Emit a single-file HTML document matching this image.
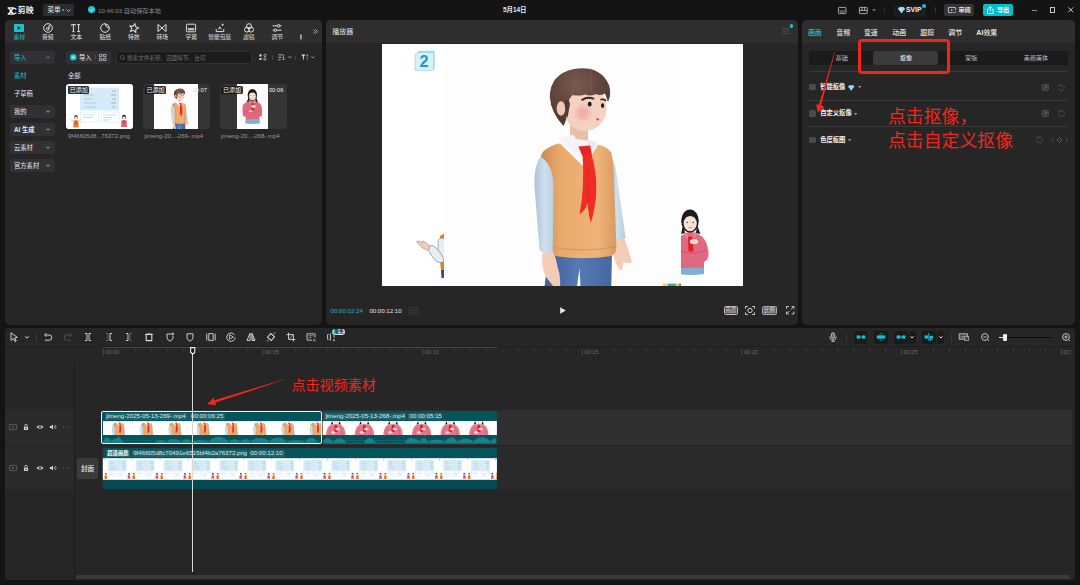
<!DOCTYPE html>
<html lang="zh-CN">
<head>
<meta charset="utf-8">
<title>剪映</title>
<style>
*{box-sizing:border-box;margin:0;padding:0}
html,body{width:1080px;height:585px;overflow:hidden;background:#141414}
body{position:relative;font-family:"Liberation Sans","Noto Sans CJK SC",sans-serif;color:#dcdcdc;font-size:7px;line-height:1}
.a{position:absolute}
.t{position:absolute;white-space:nowrap;line-height:10px;height:10px}
.panel{position:absolute;background:#262626;border-radius:5px;overflow:hidden}
.hdr{position:absolute;left:0;top:0;right:0;height:23px;background:#2e2e2e}
.cy{color:#1fc3d0}
.btn{position:absolute;background:#333334;border-radius:2px}
svg{position:absolute;overflow:visible}
.ic{stroke:#d8d8d8;fill:none;stroke-width:1}
</style>
</head>
<body>
<svg width="0" height="0" style="left:0;top:0"><defs>
<filter id="bl" x="-50%" y="-50%" width="200%" height="200%"><feGaussianBlur stdDeviation="2.2"/></filter>
<linearGradient id="gv" x1="0" x2="1" y1="0" y2="0"><stop offset="0" stop-color="#c98a55"/><stop offset="0.25" stop-color="#e9a96c"/><stop offset="0.75" stop-color="#f0b47a"/><stop offset="1" stop-color="#d99a62"/></linearGradient>
<linearGradient id="gs" x1="0" x2="1" y1="0" y2="0"><stop offset="0" stop-color="#a9c3d8"/><stop offset="0.5" stop-color="#cfe0ec"/><stop offset="1" stop-color="#b4cbdd"/></linearGradient>
<linearGradient id="gp" x1="0" x2="1" y1="0" y2="0"><stop offset="0" stop-color="#3f5f96"/><stop offset="0.5" stop-color="#5679b4"/><stop offset="1" stop-color="#4668a2"/></linearGradient>
<radialGradient id="gh" cx="0.45" cy="0.3" r="0.7"><stop offset="0" stop-color="#7a5a50"/><stop offset="1" stop-color="#4e362f"/></radialGradient>
<symbol id="boy" viewBox="0 0 236 242" overflow="visible"><g transform="translate(-444,-44)">
<path d="M553 254L612 252L611.3 286L580.5 286L579.5 268.5L577 286L544.6 286Q546 268 553 254Z" fill="url(#gp)"/>
<path d="M541 156Q534 165 534.4 185L539.5 250Q546 256 553.8 252L555 170Z" fill="url(#gs)"/>
<path d="M608 152Q616 160 618 185L625.6 238Q620 243 612 240L610 170Z" fill="url(#gs)"/>
<path d="M542.6 253Q540.6 266 546 277L553 286L560 286Q561 276 557.6 267Q556 258 553.6 252Z" fill="#f3cdb8"/>
<path d="M613 240.5Q611.6 254 616 264L620 270.5Q622 271 622.6 268L623.6 262Q627 264 631.8 262.5Q629 250 624.6 239.5Z" fill="#f3cdb8"/>
<path d="M570 124L588 127V146H570Z" fill="#e8bfa8"/>
<path d="M570 138L598 142L586 168Z" fill="#f3f3f7"/>
<path d="M545 150Q553 144 560 143.5L584 167L598 145Q606 146 611 152Q614 165 614 180L616.4 248Q616 256 608 256.5Q585 260 558 256.5Q552.8 256 552.8 250L553.5 185Q553 165 541 157Q541 153 545 150Z" fill="url(#gv)"/>
<path d="M553 247.6Q585 252.6 616.2 246.6" stroke="#c98a55" stroke-width="0.9" fill="none" opacity="0.8"/><path d="M559 139L573 134.5L583 148L574 153.5Z" fill="#f4f4f8"/>
<path d="M588 140L597.5 142.5L593 151L586 148Z" fill="#e9e9f0"/>
<path d="M578.4 146.4L590.2 145.6L592 155.4L582.4 156Z" fill="#e5251f"/>
<path d="M582.6 154.5L591.4 154Q601.5 188 590.8 223.3Q588.4 214 587.6 203Q585 211 579.5 214.2Q584.6 190 582.6 154.5Z" fill="#f02c25"/><path d="M587.6 203Q589.5 185 588 165" stroke="#c81d18" stroke-width="0.8" fill="none" opacity="0.6"/>
<ellipse cx="585" cy="108" rx="21.6" ry="23" fill="#f4d2c1"/>
<circle cx="583" cy="113" r="7" fill="#f2a39c" opacity="0.75" filter="url(#bl)"/>
<path d="M563.5 126Q551 113 549.8 97Q550 74 574 69Q600 65 609 85Q611.8 94 608 102Q606.4 97 605 93.4Q600 96.4 596 94Q590 96.8 585 94.4Q578 96.4 572.6 95Q567 100 567.6 110Q567 119 563.5 126Z" fill="url(#gh)"/><path d="M577 70Q572 82 573 94M591 68Q590 82 592 94" stroke="#86675c" stroke-width="0.8" fill="none" opacity="0.55"/>
<ellipse cx="561" cy="108.5" rx="4.4" ry="7.2" fill="#f0c8b4"/><path d="M564.5 100Q569 98 570 104Q568.5 112 567.5 118Q565 112 564.5 100Z" fill="#523a32"/>
<ellipse cx="589.7" cy="104.2" rx="1.9" ry="2.4" fill="#1d1714"/>
<ellipse cx="602.6" cy="105.6" rx="1.6" ry="2.3" fill="#1d1714"/>
<path d="M582.2 99.8Q587 96.6 593.4 98.6" stroke="#3b2720" stroke-width="2" fill="none" stroke-linecap="round"/><path d="M601 99.6Q603.6 98.8 605.6 100.4" stroke="#3b2720" stroke-width="1.6" fill="none" stroke-linecap="round"/>
<ellipse cx="597.6" cy="119.4" rx="1.5" ry="1.1" fill="#c9534e"/>
</g></symbol>
<symbol id="png" viewBox="0 0 67 45" preserveAspectRatio="none"><rect width="67" height="45" fill="#fff"/>
<rect x="14" y="3.6" width="39" height="22.8" fill="#d5ebf8"/>
<path d="M18 7H24M18 11H28M18 15H27M18 19H31M18 23H30" stroke="#a9bcc8" stroke-width="0.7"/>
<path d="M46 7H50M46 15H50M46 23H50" stroke="#5fc9d6" stroke-width="0.9"/><path d="M45 11H50M45 19H50" stroke="#e08a8a" stroke-width="0.9"/>
<rect x="14.5" y="28" width="18" height="10" fill="#fff" stroke="#cfe3ee" stroke-width="0.5"/><rect x="35" y="28" width="18" height="10" fill="#fff" stroke="#cfe3ee" stroke-width="0.5"/>
<path d="M17 31H29M17 33.5H27M37 31H50M37 33.5H46M37 36H44" stroke="#b8c2c8" stroke-width="0.6"/>
<circle cx="2.6" cy="2.4" r="1.2" fill="#6fd0e0"/>
<ellipse cx="10" cy="33" rx="1.8" ry="2" fill="#5a3c30"/><ellipse cx="10" cy="34" rx="1.3" ry="1.4" fill="#f3d2c0"/><path d="M7.6 36.4H12.4L12.8 43.5H7.2Z" fill="#e0842c"/><path d="M7.6 37L4.4 35.4M12.4 37L15.6 35.4" stroke="#cfd8dd" stroke-width="1"/><rect x="9.5" y="36.4" width="1" height="4" fill="#e02020"/>
<ellipse cx="58" cy="33" rx="1.9" ry="2.2" fill="#1c1a1c"/><ellipse cx="58" cy="33.8" rx="1.3" ry="1.5" fill="#f7e2d6"/><path d="M55.4 36.4Q58 35.4 60.6 36.4L61 43H55Z" fill="#e0607a"/><rect x="57.5" y="36.2" width="1" height="3.4" fill="#e02020"/>
</symbol>
<symbol id="girlT" viewBox="0 0 28.4 13.9"><rect width="28.4" height="13.9" fill="#fff"/>
<path d="M10.6 0L9 3.6L11.4 2.8ZM17.8 0L19.4 3.6L17 2.8Z" fill="#1c1a1c"/>
<path d="M11.8 0H16.6V2.2Q14.2 3.4 11.8 2.2Z" fill="#f7e2d6"/>
<path d="M4.6 13.9Q4.6 7.4 8 4.4Q10.4 2.8 14.2 2.8Q18 2.8 20.4 4.4Q23.8 7.4 23.8 13.9Z" fill="#e4798d"/>
<path d="M7.6 13.9Q7.6 9 9.4 6.2M20.8 13.9Q20.8 9 19 6.2" stroke="#c9566e" stroke-width="0.5" fill="none"/>
<path d="M11.6 2.6L14.2 4.6L16.8 2.6L17.6 3.6L14.2 6L10.8 3.6Z" fill="#f090a4"/>
<path d="M13 4H15.4L16 10.8H12.6Z" fill="#e21c24"/>
<ellipse cx="16" cy="8" rx="2.3" ry="1.4" fill="#f9dccd"/><ellipse cx="11.6" cy="11.4" rx="2.2" ry="1.2" fill="#f9dccd"/>
</symbol>
<symbol id="girl" viewBox="0 0 60 80" overflow="visible"><g transform="translate(-660,-200)">
<path d="M672 240Q680 232 690 231Q700 232 707 240Q710 252 708 262L703 263L704 268.5L677 269L677.5 263L672 262Q670 250 672 240Z" fill="#e0687f"/>
<path d="M677 268L704 267.5L704.5 276Q690 277.5 676.5 276Z" fill="#7fb0cf"/>
<path d="M683 224Q681 231 679 235L685 233ZM697 224Q699 231 701 235L695.5 233Z" fill="#1c1a1c"/>
<ellipse cx="690" cy="221" rx="9" ry="11.5" fill="#1c1a1c"/>
<ellipse cx="690.2" cy="223.5" rx="6.6" ry="7.8" fill="#f7e2d6"/>
<path d="M682.6 219Q690 213 697.6 219Q697 212.5 690 212.5Q683 212.5 682.6 219Z" fill="#1c1a1c"/>
<path d="M685 232L690 237L695.5 232L697 235L690 240L683.5 235Z" fill="#e98298"/>
<path d="M688 236.5H692.4L693.5 251.5H688.5Z" fill="#e01f26"/>
<ellipse cx="692" cy="243" rx="4.4" ry="2.6" fill="#f7dccf"/><ellipse cx="687" cy="252.5" rx="4" ry="2.2" fill="#f7dccf"/>
<path d="M674 252Q690 258 706 250" stroke="#b84b63" stroke-width="0.6" fill="none"/>
<circle cx="687.2" cy="222.4" r="0.8" fill="#222"/><circle cx="693.2" cy="222.4" r="0.8" fill="#222"/><path d="M688.4 227.2Q690.2 228.8 692 227.2" stroke="#c4525a" stroke-width="0.8" fill="none"/>
</g></symbol>
</defs></svg>
<!-- TITLE BAR -->
<div class="a" id="titlebar" style="left:0;top:0;width:1080px;height:20px;background:#141414">
  <svg style="left:6.5px;top:6.5px" width="10" height="8" viewBox="0 0 10 8"><path d="M0.6 0.8H6.6L9.4 2.4M0.6 7.2H6.6L9.4 5.6M1.6 1L6.4 7M6.4 1L1.6 7" stroke="#f2f2f2" stroke-width="1.3" fill="none"/></svg>
  <div class="t" style="left:17.8px;top:5.6px;font-size:7.9px;font-weight:700;color:#f2f2f2">剪映</div>
  <div class="btn" style="left:43px;top:4px;width:31px;height:12px;background:#2c2c2f"></div>
  <div class="t" style="left:47.5px;top:5px;font-size:6.6px;color:#e8e8e8">菜单</div>
  <div class="a" style="left:61.5px;top:9px;width:2px;height:2px;border-radius:1px;background:#1fc3d0"></div>
  <svg style="left:66px;top:8.5px" width="5" height="3" viewBox="0 0 5 3"><path d="M0.4 0.4L2.5 2.5L4.6 0.4" stroke="#cfcfcf" stroke-width="0.8" fill="none"/></svg>
  <svg style="left:87.7px;top:6.4px" width="7.2" height="7.2" viewBox="0 0 8 8"><circle cx="4" cy="4" r="4" fill="#1fc3d0"/><path d="M2.3 4.1L3.5 5.3L5.7 2.9" stroke="#fff" stroke-width="0.9" fill="none"/></svg>
  <div class="t" style="left:98px;top:5.5px;font-size:6.2px;color:#8c8c8c">10:46:03 自动保存本地</div>
  <div class="t" style="left:503px;top:5px;font-size:6.4px;color:#eaeaea;font-weight:700">5月14日</div>
  <!-- right icons -->
  <svg style="left:838px;top:6.5px" width="8.4" height="7" viewBox="0 0 8.4 7"><rect x="0.4" y="0.4" width="7.6" height="6.2" rx="0.8" stroke="#c9c9c9" stroke-width="0.8" fill="none"/><path d="M1.8 4.9H6.6" stroke="#c9c9c9" stroke-width="0.8"/><path d="M1.6 3.3H2.6M3.7 3.3H4.7M5.8 3.3H6.8" stroke="#c9c9c9" stroke-width="0.7"/></svg>
  <svg style="left:858.5px;top:6.5px" width="8.6" height="7" viewBox="0 0 8.6 7"><rect x="0.4" y="0.4" width="7.8" height="6.2" rx="0.6" stroke="#c9c9c9" stroke-width="0.8" fill="none"/><path d="M0.4 3.4H8.2M3 0.4V3.4M5.6 0.4V3.4" stroke="#c9c9c9" stroke-width="0.8"/></svg>
  <svg style="left:871.5px;top:9px" width="4" height="2.4" viewBox="0 0 4 2.4"><path d="M0 0H4L2 2.4Z" fill="#6a6a6a"/></svg>
  <div class="a" style="left:883.5px;top:7px;width:1px;height:6px;background:#333"></div>
  <div class="btn" style="left:893.5px;top:4.5px;width:32px;height:12px;background:#1d1d21;border-radius:2.5px"></div>
  <svg style="left:897.5px;top:7px" width="7" height="6" viewBox="0 0 7 6"><path d="M1.4 0H5.6L7 2L3.5 6L0 2Z" fill="#7fd6ea"/><path d="M0 2H7M2.4 2L3.5 6L4.6 2" stroke="#e9fbff" stroke-width="0.5" fill="none"/></svg>
  <div class="t" style="left:906px;top:5px;font-size:6.8px;font-weight:700;color:#f0f0f0">SVIP</div>
  <div class="a" style="left:921.5px;top:3.5px;width:4px;height:4px;border-radius:2px;background:#17c5d2"></div>
  <div class="a" style="left:934.5px;top:7px;width:1px;height:6px;background:#333"></div>
  <div class="btn" style="left:944px;top:4px;width:30px;height:12.4px;background:#333335"></div>
  <svg style="left:948px;top:6.8px" width="8" height="6.6" viewBox="0 0 8 6.6"><path d="M4.6 5.6H0.9Q0.4 5.6 0.4 5.1V0.9Q0.4 0.4 0.9 0.4H7.1Q7.6 0.4 7.6 0.9V3" stroke="#e6e6e6" stroke-width="0.8" fill="none"/><path d="M3.2 2L5 3L3.2 4Z" fill="#e6e6e6"/><path d="M5.6 5L6.5 6L7.8 4.4" stroke="#e6e6e6" stroke-width="0.8" fill="none"/></svg>
  <div class="t" style="left:958.5px;top:5px;font-size:6.1px;font-weight:700;color:#eaeaea">审阅</div>
  <div class="btn" style="left:983px;top:4px;width:30px;height:12.4px;background:#00c0cc"></div>
  <svg style="left:987.4px;top:6px" width="6.6" height="8" viewBox="0 0 6.6 8"><path d="M1.8 3.2H0.5V7.5H6.1V3.2H4.8" stroke="#fff" stroke-width="0.8" fill="none"/><path d="M3.3 5.4V0.7M1.7 2.2L3.3 0.6L4.9 2.2" stroke="#fff" stroke-width="0.8" fill="none"/></svg>
  <div class="t" style="left:997px;top:5px;font-size:6.1px;font-weight:700;color:#fff">导出</div>
  <div class="a" style="left:1031.5px;top:9.6px;width:5.6px;height:0.8px;background:#8e8e8e"></div>
  <div class="a" style="left:1049.5px;top:7.2px;width:5.8px;height:5.8px;border:0.8px solid #c4c4c4"></div>
  <svg style="left:1067.6px;top:7.2px" width="5.6" height="5.6" viewBox="0 0 5.6 5.6"><path d="M0.3 0.3L5.3 5.3M5.3 0.3L0.3 5.3" stroke="#d8d8d8" stroke-width="0.9"/></svg>
</div>

<!-- MEDIA PANEL -->
<div class="panel" id="media" style="left:5px;top:20px;width:317px;height:305px">
  <div class="hdr"></div>
  <svg style="left:14px;top:7.5px" width="1" height="1"><g class="ic" stroke="#17c5d2" style="stroke:#17c5d2"><rect x="-5" y="-4" width="10" height="8" rx="1" fill="#17c5d2" stroke="none"/><path d="M-1.3 -2L2 0L-1.3 2Z" fill="#262626" stroke="none"/></g></svg>
  <div class="t" style="left:8.5px;top:11.7px;font-size:5.8px;color:#17c5d2">素材</div>
  <svg style="left:42.5px;top:7.5px" width="1" height="1"><g class="ic" stroke="#e0e0e0" style="stroke:#e0e0e0"><circle cx="0" cy="0" r="4.3"/><circle cx="-0.3" cy="0.8" r="1.3"/><path d="M1 0.8V-2.4L2.4 -1.8"/></g></svg>
  <div class="t" style="left:37.0px;top:11.7px;font-size:5.8px;color:#e0e0e0">音频</div>
  <svg style="left:71px;top:7.5px" width="1" height="1"><g class="ic" stroke="#e0e0e0" style="stroke:#e0e0e0"><path d="M-4.6 -3.4H-0.6M-2.6 -3.4V3.6M-3.6 3.6H-1.6M-4.6 -3.4V-2.4M-0.6 -3.4V-2.4M1.2 -3.4H4M1.2 3.6H4M2.6 -3.4V3.6"/></g></svg>
  <div class="t" style="left:65.5px;top:11.7px;font-size:5.8px;color:#e0e0e0">文本</div>
  <svg style="left:100px;top:7.5px" width="1" height="1"><g class="ic" stroke="#e0e0e0" style="stroke:#e0e0e0"><path d="M4.3 0A4.3 4.3 0 1 1 0 -4.3"/><path d="M0 -4.3Q0.6 -0.4 4.3 0Q4 -3.6 0 -4.3Z"/></g></svg>
  <div class="t" style="left:94.5px;top:11.7px;font-size:5.8px;color:#e0e0e0">贴纸</div>
  <svg style="left:128.5px;top:7.5px" width="1" height="1"><g class="ic" stroke="#e0e0e0" style="stroke:#e0e0e0"><path d="M0 -4.4L1.3 -1.6L4.4 -1.2L2.1 0.9L2.7 4L0 2.4L-2.7 4L-2.1 0.9L-4.4 -1.2L-1.3 -1.6Z" transform="rotate(12)"/></g></svg>
  <div class="t" style="left:123.0px;top:11.7px;font-size:5.8px;color:#e0e0e0">特效</div>
  <svg style="left:157px;top:7.5px" width="1" height="1"><g class="ic" stroke="#e0e0e0" style="stroke:#e0e0e0"><path d="M-4 -3.6L4 3.6V-3.6L-4 3.6Z"/></g></svg>
  <div class="t" style="left:151.5px;top:11.7px;font-size:5.8px;color:#e0e0e0">转场</div>
  <svg style="left:186px;top:7.5px" width="1" height="1"><g class="ic" stroke="#e0e0e0" style="stroke:#e0e0e0"><rect x="-4.6" y="-3.8" width="9.2" height="7.6" rx="1"/><rect x="-3.2" y="0" width="6.4" height="2.4" fill="#bdbdbd" stroke="none"/></g></svg>
  <div class="t" style="left:180.5px;top:11.7px;font-size:5.8px;color:#e0e0e0">字幕</div>
  <svg style="left:214.5px;top:7.5px" width="1" height="1"><g class="ic" stroke="#e0e0e0" style="stroke:#e0e0e0"><path d="M-3.8 1V3.6H3.8V1M-1.6 1.4L-0.2 -1.2L1.2 1.4"/><path d="M2.6 -4.4V-2M1.4 -3.2H3.8" stroke-width="0.8"/></g></svg>
  <div class="t" style="left:203.2px;top:11.7px;font-size:5.8px;color:#e0e0e0">智能包装</div>
  <svg style="left:243.5px;top:7.5px" width="1" height="1"><g class="ic" stroke="#e0e0e0" style="stroke:#e0e0e0"><circle cx="0" cy="-1.8" r="2.5"/><circle cx="-2" cy="1.6" r="2.5"/><circle cx="2" cy="1.6" r="2.5"/></g></svg>
  <div class="t" style="left:238.0px;top:11.7px;font-size:5.8px;color:#e0e0e0">滤镜</div>
  <svg style="left:272px;top:7.5px" width="1" height="1"><g class="ic" stroke="#e0e0e0" style="stroke:#e0e0e0"><path d="M-4.4 -2.2H0.4M3 -2.2H4.4M-4.4 2.2H-3M-0.4 2.2H4.4"/><circle cx="1.7" cy="-2.2" r="1.3"/><circle cx="-1.7" cy="2.2" r="1.3"/></g></svg>
  <div class="t" style="left:266.5px;top:11.7px;font-size:5.8px;color:#e0e0e0">调节</div>
  <div class="t" style="left:294.5px;top:11.7px;font-size:5.8px;color:#e0e0e0;width:2.6px;overflow:hidden">模</div>
  <svg style="left:307.5px;top:9px" width="5" height="5" viewBox="0 0 5 5"><path d="M0.4 0.4L2.4 2.5L0.4 4.6M2.6 0.4L4.6 2.5L2.6 4.6" stroke="#cfcfcf" stroke-width="0.7" fill="none"/></svg>
  <!-- sidebar -->
  <div class="btn" style="left:4.6px;top:31px;width:45px;height:13px;background:#313133"></div>
  <div class="t cy" style="left:9px;top:32.5px;font-size:6.3px">导入</div>
  <svg style="left:41px;top:36px" width="4" height="3" viewBox="0 0 4 3"><path d="M0.4 2.4L2 0.7L3.6 2.4" stroke="#17c5d2" stroke-width="0.8" fill="none"/></svg>
  <div class="t cy" style="left:9px;top:50.5px;font-size:6.3px">素材</div>
  <div class="t" style="left:9px;top:68.5px;font-size:6.3px;color:#e6e6e6">子草稿</div>
  <div class="btn" style="left:4.6px;top:85px;width:45px;height:13px;background:#313133"></div>
  <div class="t" style="left:9px;top:86.5px;font-size:6.3px;color:#e6e6e6;font-weight:400">我的</div>
  <svg style="left:41px;top:90px" width="4" height="3" viewBox="0 0 4 3"><path d="M0.4 0.6L2 2.3L3.6 0.6" stroke="#d0d0d0" stroke-width="0.8" fill="none"/></svg>
  <div class="btn" style="left:4.6px;top:103px;width:45px;height:13px;background:#313133"></div>
  <div class="t" style="left:9px;top:104.5px;font-size:6.3px;color:#e6e6e6;font-weight:700">AI 生成</div>
  <svg style="left:41px;top:108px" width="4" height="3" viewBox="0 0 4 3"><path d="M0.4 0.6L2 2.3L3.6 0.6" stroke="#d0d0d0" stroke-width="0.8" fill="none"/></svg>
  <div class="btn" style="left:4.6px;top:121px;width:45px;height:13px;background:#313133"></div>
  <div class="t" style="left:9px;top:122.5px;font-size:6.3px;color:#e6e6e6;font-weight:400">云素材</div>
  <svg style="left:41px;top:126px" width="4" height="3" viewBox="0 0 4 3"><path d="M0.4 0.6L2 2.3L3.6 0.6" stroke="#d0d0d0" stroke-width="0.8" fill="none"/></svg>
  <div class="btn" style="left:4.6px;top:139px;width:45px;height:13px;background:#313133"></div>
  <div class="t" style="left:9px;top:140.5px;font-size:6.3px;color:#e6e6e6;font-weight:400">官方素材</div>
  <svg style="left:41px;top:144px" width="4" height="3" viewBox="0 0 4 3"><path d="M0.4 0.6L2 2.3L3.6 0.6" stroke="#d0d0d0" stroke-width="0.8" fill="none"/></svg>
  <!-- import row -->
  <div class="btn" style="left:61px;top:31px;width:45px;height:13px;background:#313133"></div>
  <svg style="left:64.5px;top:34.2px" width="6.6" height="6.6" viewBox="0 0 8 8"><circle cx="4" cy="4" r="4" fill="#17c5d2"/><path d="M4 2.2V5.8M2.2 4H5.8" stroke="#fff" stroke-width="0.9"/></svg>
  <div class="t" style="left:74px;top:32.5px;font-size:6.3px;color:#f0f0f0">导入</div>
  <div class="a" style="left:89.5px;top:35px;width:0.6px;height:5px;background:#4a4a4a"></div>
  <svg style="left:94px;top:34px" width="7.4" height="7" viewBox="0 0 7.4 7"><path d="M0.4 0.4H3V2.6H0.4ZM4.4 0.4H7V2.6H4.4ZM0.4 4.4H3V6.6H0.4ZM4.4 4.4H7V6.6H4.4Z" stroke="#d6d6d6" stroke-width="0.7" fill="none"/></svg>
  <div class="a" style="left:110.5px;top:31px;width:136px;height:13.4px;background:#1b1b1b;border-radius:2px;border:0.6px solid #2f2f2f"></div>
  <svg style="left:114.5px;top:35px" width="5.4" height="5.4" viewBox="0 0 5.4 5.4"><circle cx="2.3" cy="2.3" r="1.9" stroke="#777" stroke-width="0.6" fill="none"/><path d="M3.7 3.7L5 5" stroke="#777" stroke-width="0.6"/></svg>
  <div class="t" style="left:122px;top:33px;font-size:5.6px;color:#6f6f6f">搜索文件名称、画面情节、台词</div>
  <svg style="left:253.5px;top:34px" width="8" height="6.4" viewBox="0 0 8 6.4"><path d="M0.3 0.3H2.6V2.4H0.3ZM0.3 4H2.6V6.1H0.3Z" fill="#cfcfcf"/><circle cx="6" cy="1.4" r="1.2" stroke="#cfcfcf" stroke-width="0.7" fill="none"/><circle cx="6" cy="5" r="1.2" stroke="#cfcfcf" stroke-width="0.7" fill="none"/></svg>
  <div class="a" style="left:267px;top:35px;width:0.6px;height:5px;background:#444"></div>
  <svg style="left:272.5px;top:34px" width="7" height="6.6" viewBox="0 0 7 6.6"><path d="M0.2 0.8H4.6M0.2 3.3H3.6M0.2 5.8H2.8" stroke="#cfcfcf" stroke-width="0.8"/><path d="M5.6 0.6V5.8M4.6 4.8L5.6 6L6.6 4.8" stroke="#cfcfcf" stroke-width="0.7" fill="none"/></svg>
  <svg style="left:283px;top:36.4px" width="3.6" height="2.4" viewBox="0 0 3.6 2.4"><path d="M0.3 0.4L1.8 2L3.3 0.4" stroke="#cfcfcf" stroke-width="0.7" fill="none"/></svg>
  <div class="a" style="left:290px;top:35px;width:0.6px;height:5px;background:#444"></div>
  <svg style="left:295.6px;top:34.2px" width="8" height="6.4" viewBox="0 0 8 6.4"><path d="M0.2 0.4H4.6L2.9 2.6V5.8L1.9 5.2V2.6Z" fill="#d6d6d6"/><path d="M5 1.2H7.6M5.4 3.2H7.2M5.8 5.2H7" stroke="#d6d6d6" stroke-width="0.6"/></svg>
  <svg style="left:306px;top:36.4px" width="3.6" height="2.4" viewBox="0 0 3.6 2.4"><path d="M0.3 0.4L1.8 2L3.3 0.4" stroke="#cfcfcf" stroke-width="0.7" fill="none"/></svg>
  <div class="t" style="left:63px;top:50.5px;font-size:6.3px;color:#e0e0e0">全部</div>
  <!-- THUMBS -->
  <div class="a" id="th1" style="left:61.3px;top:64.3px;width:67px;height:45px;border-radius:3.5px;background:#fff;overflow:hidden"><svg style="left:0;top:0" width="67" height="45"><use href="#png" x="0" y="0" width="67" height="45"/></svg><div class="a" style="left:1.8px;top:2px;width:21.4px;height:8px;background:rgba(20,20,20,0.88);border-radius:1.5px"></div><div class="t" style="left:3.4px;top:1px;font-size:6px;color:#f4f4f4">已添加</div></div>
  <div class="a" id="th2" style="left:138px;top:64.3px;width:67px;height:45px;border-radius:3.5px;background:#353535;overflow:hidden"><div class="a" style="left:11.1px;top:0;width:44.2px;height:45px;background:#fdfdfd"></div><svg style="left:11.1px;top:0" width="44.2" height="45" viewBox="0 0 236 242"><use href="#boy" x="0" y="0" width="236" height="242"/></svg><div class="a" style="left:1.8px;top:2px;width:21.4px;height:8px;background:rgba(20,20,20,0.88);border-radius:1.5px"></div><div class="t" style="left:3.4px;top:1px;font-size:6px;color:#f4f4f4">已添加</div><div class="t" style="left:49.4px;top:1px;font-size:5.8px;color:#f2f2f2"><span style="color:#cfe8c8">00</span>:07</div></div>
  <div class="a" id="th3" style="left:214.5px;top:64.3px;width:67px;height:45px;border-radius:3.5px;background:#353535;overflow:hidden"><div class="a" style="left:17.7px;top:0;width:30.5px;height:45px;background:#fdfdfd"></div><svg style="left:17.7px;top:0" width="30.5" height="45" viewBox="660.5 200 58.6 86.4"><use href="#girl" x="660" y="200" width="60" height="80"/></svg><div class="a" style="left:1.8px;top:2px;width:21.4px;height:8px;background:rgba(20,20,20,0.88);border-radius:1.5px"></div><div class="t" style="left:3.4px;top:1px;font-size:6px;color:#f4f4f4">已添加</div><div class="t" style="left:49.4px;top:1px;font-size:5.8px;color:#f2f2f2">00:06</div></div>
  <div class="t" style="left:63px;top:111px;font-size:6px;color:#9a9a9a">9f46605d8...76372.png</div>
  <div class="t" style="left:139.5px;top:111px;font-size:6px;color:#9a9a9a">jimeng-20...-269-.mp4</div>
  <div class="t" style="left:216px;top:111px;font-size:6px;color:#9a9a9a">jimeng-20...-268-.mp4</div>
</div>

<!-- PLAYER PANEL -->
<div class="panel" id="player" style="left:326px;top:20px;width:472px;height:305px">
  <div class="hdr"></div>
  <div class="t" style="left:6.3px;top:7px;font-size:7px;color:#e2e2e2">播放器</div>
  <svg style="left:455.5px;top:8px" width="7" height="6" viewBox="0 0 7 6"><path d="M0 0.5H7M0 3H7M0 5.5H7" stroke="#5c5c5c" stroke-width="0.7"/></svg>
  <div class="a" style="left:463.7px;top:4px;width:3.7px;height:3.7px;border-radius:2px;background:#17c5d2"></div>
  <!-- VIDEO -->
  <div class="a" id="video" style="left:56px;top:24px;width:360.5px;height:241.8px;background:#fff;overflow:hidden">
    <svg style="left:0;top:0" width="360.5" height="241.8" viewBox="382 44 360.5 241.8">
      <!-- left figure (bg image) -->
      <path d="M440 236Q444 233 446 234V277H442Q439 262 440 236Z" fill="#e8821e"/>
      <path d="M441 270L444 270V278H441.5Z" fill="#2f4f8a"/>
      <path d="M438 240Q442 236 445 240V262H441Q437 250 438 240Z" fill="#e6edf0" stroke="#5d7686" stroke-width="0.5"/>
      <path d="M429 246Q433 244 436 248Q444 256 444 262Q440 264 436 261Q431 256 428.5 250Z" fill="#e9eef1" stroke="#5d7686" stroke-width="0.6"/>
      <path d="M416.5 241.5Q419 240 423 243L422.5 240.6Q426 242 430 246.5Q430 249.5 427.5 250.5Q421 248.5 416.5 241.5Z" fill="#f2c9bb" stroke="#8a6a66" stroke-width="0.4"/>
      <!-- girl (bg image) -->
      <g>
      <path d="M681 236Q690 229 698 234Q707 238 708.5 252Q709 260 704 262L704 268.5L681 269Z" fill="#e0687f"/>
      <path d="M681 268L704 267.5L704 274Q692 275.5 681 274.5Z" fill="#7fb0cf"/>
      <path d="M683 224Q682 231 681 234L685 233ZM697 224Q699 231 700.5 234L696 233Z" fill="#1c1a1c"/>
      <ellipse cx="690" cy="221" rx="8.8" ry="11.5" fill="#1c1a1c"/>
      <ellipse cx="690.2" cy="223.5" rx="6.6" ry="7.8" fill="#f7e2d6"/>
      <path d="M682.6 219Q690 213 697.6 219Q697 212.5 690 212.5Q683 212.5 682.6 219Z" fill="#1c1a1c"/>
      <path d="M685 232L690 237L695.5 232L697 235L690 240L683.5 235Z" fill="#e98298"/>
      <path d="M688 236.5H692.4L693.5 251.5H688.5Z" fill="#e01f26"/>
      <ellipse cx="694" cy="241.5" rx="4.2" ry="2.6" fill="#f7dccf"/>
      <path d="M681 251Q694 256 706 250" stroke="#b84b63" stroke-width="0.6" fill="none"/>
      <circle cx="687.2" cy="222.4" r="0.7" fill="#222"/><circle cx="693.2" cy="222.4" r="0.7" fill="#222"/>
      <path d="M688.4 227.2Q690.2 228.6 692 227.2" stroke="#c4525a" stroke-width="0.7" fill="none"/>
      </g>
      <!-- "2" badge -->
      <path d="M418.6 50.8H433.4Q434.8 50.8 434.8 52.2V68Q434.8 69.2 433.8 69.8L432.8 70.4Q432 70.8 431 70.8H416Q414.6 70.8 414.6 69.4V55Z" fill="#a6dbe8"/>
      <path d="M417 53H432.2Q433.2 53 433.2 54V68.6Q433.2 69.9 432 69.9H416.6Q415.5 69.9 415.5 68.8V55.4Z" fill="#d9f0f8"/>
      <text x="424" y="66.9" text-anchor="middle" font-family="Liberation Sans, sans-serif" font-weight="700" font-size="16.3" fill="#1a9fc0">2</text>
      <!-- strip -->
      <!-- main clip -->
      <rect x="444" y="44" width="236.4" height="242" fill="#fdfdfd"/>
      <use href="#boy" x="444" y="44" width="236" height="242"/>
      <rect x="663" y="283.6" width="5" height="2.4" fill="#f3d34a"/><rect x="668" y="283.6" width="8" height="2.4" fill="#3fae9a"/><rect x="676" y="283.6" width="3" height="2.4" fill="#f3d34a"/><rect x="679" y="283.6" width="2" height="2.4" fill="#3d8fe0"/>
    </svg>
  </div>
  <!-- controls -->
  <div class="t cy" style="left:4.6px;top:285.5px;font-size:6.1px;color:#17b8c6">00:00:02:24</div>
  <div class="t" style="left:43.4px;top:285.5px;font-size:6.1px;color:#e4e4e4">00:00:12:10</div>
  <svg style="left:82.4px;top:287px" width="11" height="8" viewBox="0 0 11 8"><path d="M0 0.8H5M6 0.8H11M0 3H5M6 3H11M0 5.2H5M6 5.2H11M0 7.4H5M6 7.4H11" stroke="#3c3c3c" stroke-width="1"/></svg>
  <svg style="left:233.6px;top:287.4px" width="6" height="7" viewBox="0 0 6 7"><path d="M0.2 0.2L5.8 3.5L0.2 6.8Z" fill="#e8e8e8"/></svg>
  <div class="a" style="left:398px;top:286px;width:14.2px;height:8.8px;border:0.8px solid #bdbdbd;border-radius:1.6px;background:#4c4c4c"></div>
  <div class="t" style="left:399.6px;top:285.4px;font-size:5.4px;color:#e6e6e6">画质</div>
  <svg style="left:419.4px;top:286px" width="10" height="9" viewBox="0 0 10 9"><path d="M0.5 2.6V0.5H2.8M7.2 0.5H9.5V2.6M9.5 6.4V8.5H7.2M2.8 8.5H0.5V6.4" stroke="#e0e0e0" stroke-width="0.9" fill="none"/><circle cx="5" cy="4.5" r="2.2" stroke="#e0e0e0" stroke-width="0.9" fill="none"/></svg>
  <div class="a" style="left:436.2px;top:286px;width:14.6px;height:8.8px;border:0.8px solid #a8a8a8;border-radius:1.6px;background:#5a5a5a"></div>
  <div class="t" style="left:438px;top:285.4px;font-size:5.4px;color:#e6e6e6">比例</div>
  <svg style="left:459.6px;top:286.4px" width="8.4" height="8.4" viewBox="0 0 8.4 8.4"><path d="M0.5 2.8V0.5H2.8M5.6 0.5H7.9V2.8M7.9 5.6V7.9H5.6M2.8 7.9H0.5V5.6" stroke="#e0e0e0" stroke-width="0.9" fill="none"/><path d="M5 3.4L7.4 1M1 7.4L3.4 5" stroke="#e0e0e0" stroke-width="0.8"/></svg>
</div>

<!-- INSPECTOR PANEL -->
<div class="panel" id="insp" style="left:802px;top:20px;width:273px;height:305px">
  <div class="hdr"></div>
  <div class="t" style="left:5.9px;top:7.5px;font-size:6.95px;color:#17c5d2;font-weight:500">画面</div>
  <div class="t" style="left:34.2px;top:7.5px;font-size:6.95px;color:#e6e6e6;font-weight:500">音频</div>
  <div class="t" style="left:61.9px;top:7.5px;font-size:6.95px;color:#e6e6e6;font-weight:500">变速</div>
  <div class="t" style="left:90.2px;top:7.5px;font-size:6.95px;color:#e6e6e6;font-weight:500">动画</div>
  <div class="t" style="left:118.2px;top:7.5px;font-size:6.95px;color:#e6e6e6;font-weight:500">跟踪</div>
  <div class="t" style="left:146.2px;top:7.5px;font-size:6.95px;color:#e6e6e6;font-weight:500">调节</div>
  <div class="t" style="left:174.2px;top:7.5px;font-size:6.95px;color:#e6e6e6;font-weight:500"><b style="font-size:7.2px">AI</b>效果</div>
  <div class="a" style="left:6.8px;top:31px;width:259.2px;height:14px;background:#1b1b1b;border-radius:2.5px"></div>
  <div class="a" style="left:71.3px;top:31px;width:64.7px;height:14px;background:#3b3b3b;border-radius:2.5px"></div>
  <div class="t" style="left:33.6px;top:33px;font-size:6.1px;color:#bdbdbd">基础</div>
  <div class="t" style="left:97.9px;top:33px;font-size:6.1px;color:#f4f4f4">抠像</div>
  <div class="t" style="left:163.2px;top:33px;font-size:6.1px;color:#bdbdbd">蒙版</div>
  <div class="t" style="left:221.8px;top:33px;font-size:6.1px;color:#bdbdbd">美颜美体</div>
  <div class="a" style="left:6.8px;top:51.1px;width:259.2px;height:0.8px;background:#3a3a3a"></div>
  <div class="a" style="left:6.8px;top:79.7px;width:259.2px;height:0.8px;background:#3a3a3a"></div>
  <div class="a" style="left:6.8px;top:106.2px;width:259.2px;height:0.8px;background:#3a3a3a"></div>
  <div class="a" style="left:7px;top:63.9px;width:6.6px;height:6.6px;border-radius:1.6px;background:#4b4b4b"></div>
  <div class="t" style="left:18.2px;top:62.0px;font-size:6.3px;color:#f2f2f2;font-weight:700">智能抠像</div>
  <div class="a" style="left:7px;top:90.3px;width:6.6px;height:6.6px;border-radius:1.6px;background:#4b4b4b"></div>
  <div class="t" style="left:18.2px;top:88.4px;font-size:6.3px;color:#f2f2f2;font-weight:700">自定义抠像</div>
  <div class="a" style="left:7px;top:116.5px;width:6.6px;height:6.6px;border-radius:1.6px;background:#4b4b4b"></div>
  <div class="t" style="left:18.2px;top:114.6px;font-size:6.3px;color:#f2f2f2;font-weight:700">色度抠图</div>
  <svg style="left:46.2px;top:64.6px" width="6.4" height="5.4" viewBox="0 0 7 6"><path d="M1.4 0H5.6L7 2L3.5 6L0 2Z" fill="#58c9ea"/><path d="M0 2H7M2.4 2L3.5 6L4.6 2" stroke="#e9fbff" stroke-width="0.5" fill="none"/></svg>
  <svg style="left:55.7px;top:66.4px" width="3.4" height="2.2" viewBox="0 0 3.4 2.2"><path d="M0 0H3.4L1.7 2.2Z" fill="#9a9a9a"/></svg>
  <svg style="left:51.9px;top:92.8px" width="3.4" height="2.2" viewBox="0 0 3.4 2.2"><path d="M0 0H3.4L1.7 2.2Z" fill="#9a9a9a"/></svg>
  <svg style="left:45.6px;top:119.0px" width="3.4" height="2.2" viewBox="0 0 3.4 2.2"><path d="M0 0H3.4L1.7 2.2Z" fill="#9a9a9a"/></svg>
  <svg style="left:239.6px;top:63.8px" width="6.8" height="6.8" viewBox="0 0 6.8 6.8"><rect x="0.4" y="0.4" width="6" height="6" rx="0.6" fill="#3a3a3a" stroke="#5a5a5a" stroke-width="0.7"/><path d="M2.2 4.6L4.6 2.2M3 2.2H4.6V3.8" stroke="#777" stroke-width="0.6" fill="none"/></svg>
  <svg style="left:256.4px;top:63.8px" width="6.8" height="6.8" viewBox="0 0 6.8 6.8"><path d="M1.3 1.8A2.9 2.9 0 1 1 0.6 4.2" stroke="#5c5c5c" stroke-width="0.7" fill="none"/><path d="M0.4 0.6L1.2 2.2L2.8 1.6" stroke="#5c5c5c" stroke-width="0.7" fill="none"/></svg>
  <svg style="left:239.6px;top:90.2px" width="6.8" height="6.8" viewBox="0 0 6.8 6.8"><rect x="0.4" y="0.4" width="6" height="6" rx="0.6" fill="#3a3a3a" stroke="#5a5a5a" stroke-width="0.7"/><path d="M2.2 4.6L4.6 2.2M3 2.2H4.6V3.8" stroke="#777" stroke-width="0.6" fill="none"/></svg>
  <svg style="left:256.4px;top:90.2px" width="6.8" height="6.8" viewBox="0 0 6.8 6.8"><path d="M1.3 1.8A2.9 2.9 0 1 1 0.6 4.2" stroke="#5c5c5c" stroke-width="0.7" fill="none"/><path d="M0.4 0.6L1.2 2.2L2.8 1.6" stroke="#5c5c5c" stroke-width="0.7" fill="none"/></svg>
  <svg style="left:234px;top:116.4px" width="6.8" height="6.8" viewBox="0 0 6.8 6.8"><path d="M1.3 1.8A2.9 2.9 0 1 1 0.6 4.2" stroke="#5c5c5c" stroke-width="0.7" fill="none"/><path d="M0.4 0.6L1.2 2.2L2.8 1.6" stroke="#5c5c5c" stroke-width="0.7" fill="none"/></svg>
  <svg style="left:249px;top:116.8px" width="17" height="6" viewBox="0 0 17 6"><path d="M2.4 0.6L0.4 3L2.4 5.4M14.6 0.6L16.6 3L14.6 5.4" stroke="#5c5c5c" stroke-width="0.7" fill="none"/><path d="M8.5 0.5L11 3L8.5 5.5L6 3Z" stroke="#6a6a6a" stroke-width="0.7" fill="none"/></svg>
  <div class="a" style="left:55.7px;top:19px;width:92.3px;height:35px;border:3px solid #f2261b;border-radius:4px"></div>
  <svg style="left:0;top:0" width="273" height="305" viewBox="802 20 273 305"><path d="M835 52L821.2 105L824.3 107L817.8 112.4L816.1 104.6L819 104.4L834.5 52Z" fill="#f2261b"/></svg>
  <div class="t" style="left:85.9px;top:84.8px;font-size:17.9px;line-height:24.1px;height:auto;color:#f2261b;white-space:pre">点击抠像，
点击自定义抠像</div>
</div>

<!-- TIMELINE PANEL -->
<div class="a" style="left:5px;top:328.3px;width:1070px;height:6px;background:#262626;border-radius:4px 4px 0 0"></div>
<div class="panel" id="tl" style="left:5px;top:329px;width:1070px;height:251px;border-radius:4px">
<!--TL1-->
  <svg style="left:9.2px;top:8.25px" width="1" height="1"><g stroke="#dedede" stroke-width="0.9" fill="none" stroke-linejoin="round" ><path d="M-3 -4.2L3.4 0.4L0.6 1L2.2 4L1 4.6L-0.6 1.6L-3 3.4Z"/></g></svg>
  <svg style="left:21.7px;top:8.25px" width="1" height="1"><g stroke="#dedede" stroke-width="1" fill="none" stroke-linejoin="round" ><path d="M-1.8 -0.6L0 1.2L1.8 -0.6"/></g></svg>
  <div class="a" style="left:31px;top:4.5px;width:0.7px;height:8px;background:#3c3c3c"></div>
  <svg style="left:43.3px;top:8.25px" width="1" height="1"><g stroke="#dedede" stroke-width="0.9" fill="none" stroke-linejoin="round" ><path d="M-3.2 -2H1.2A2.6 2.6 0 0 1 1.2 3.2H-3"/><path d="M-1.6 -3.8L-3.4 -2L-1.6 -0.2"/></g></svg>
  <svg style="left:63.3px;top:8.25px" width="1" height="1"><g stroke="#555" stroke-width="0.9" fill="none" stroke-linejoin="round" ><path d="M3.2 -2H-1.2A2.6 2.6 0 0 0 -1.2 3.2H3"/><path d="M1.6 -3.8L3.4 -2L1.6 -0.2"/></g></svg>
  <svg style="left:83.3px;top:8.25px" width="1" height="1"><g stroke="#dedede" stroke-width="0.9" fill="none" stroke-linejoin="round" ><path d="M-3 -3.5H-1V3.5H-3M3 -3.5H1V3.5H3"/></g></svg>
  <svg style="left:103.7px;top:8.25px" width="1" height="1"><g stroke="#dedede" stroke-width="0.9" fill="none" stroke-linejoin="round" ><path d="M-3 -3.5H-1V3.5H-3" stroke="#6a6a6a"/><path d="M3 -3.5H1V3.5H3"/></g></svg>
  <svg style="left:123.8px;top:8.25px" width="1" height="1"><g stroke="#dedede" stroke-width="0.9" fill="none" stroke-linejoin="round" ><path d="M-3 -3.5H-1V3.5H-3"/><path d="M3 -3.5H1V3.5H3" stroke="#6a6a6a"/></g></svg>
  <svg style="left:144.2px;top:8.25px" width="1" height="1"><g stroke="#dedede" stroke-width="0.9" fill="none" stroke-linejoin="round" ><rect x="-2.8" y="-2.6" width="5.6" height="6.2" stroke-width="1.1"/><path d="M-3.8 -2.6H3.8M0 -4.2V-2.6"/></g></svg>
  <svg style="left:164.7px;top:8.25px" width="1" height="1"><g stroke="#dedede" stroke-width="0.9" fill="none" stroke-linejoin="round" ><path d="M-3 -3H1.4M3 -1V0.4Q3 2.8 0 4.2Q-3 2.8 -3 0.4V-3"/><path d="M2.8 -4.4V-1.6M1.4 -3H4.2"/></g></svg>
  <svg style="left:185.3px;top:8.25px" width="1" height="1"><g stroke="#dedede" stroke-width="0.9" fill="none" stroke-linejoin="round" ><path d="M-3 -3.2H3V0.4Q3 2.8 0 4.2Q-3 2.8 -3 0.4Z"/></g></svg>
  <svg style="left:205.5px;top:8.25px" width="1" height="1"><g stroke="#dedede" stroke-width="0.9" fill="none" stroke-linejoin="round" ><rect x="-2.2" y="-3.4" width="4.4" height="6.8"/><path d="M-4.2 -3.4V3.4M4.2 -3.4V3.4"/></g></svg>
  <svg style="left:225.5px;top:8.25px" width="1" height="1"><g stroke="#dedede" stroke-width="0.9" fill="none" stroke-linejoin="round" ><path d="M3.6 -2A4.2 4.2 0 1 0 4.2 0.4"/><path d="M-1.4 -2.2L2.4 0L-1.4 2.2Z" stroke-width="0.8"/></g></svg>
  <svg style="left:245.8px;top:8.25px" width="1" height="1"><g stroke="#dedede" stroke-width="0.9" fill="none" stroke-linejoin="round" ><path d="M-0.9 -3.8V3.4H-4Z"/><path d="M0.9 -3.8V3.4H4Z" fill="#666"/></g></svg>
  <svg style="left:266.2px;top:8.25px" width="1" height="1"><g stroke="#dedede" stroke-width="0.9" fill="none" stroke-linejoin="round" ><rect x="-2.5" y="-2.5" width="5" height="5" transform="rotate(40)" stroke-width="1"/><path d="M2.6 -4.2L4.2 -3.4M-2.6 4.2L-4.2 3.4" stroke-width="0.8"/></g></svg>
  <svg style="left:286.2px;top:8.25px" width="1" height="1"><g stroke="#dedede" stroke-width="0.9" fill="none" stroke-linejoin="round" ><path d="M-2.4 -4.4V2.4H4.4M-4.4 -2.4H2.4V4.4"/><path d="M-1.6 1.6L1.8 -1.8" stroke-width="0.6"/></g></svg>
  <svg style="left:306.3px;top:8.25px" width="1" height="1"><g stroke="#dedede" stroke-width="0.9" fill="none" stroke-linejoin="round" ><path d="M1 3.2H-4V-3.2H4V0.6" stroke-width="0.8" stroke-linejoin="miter"/><path d="M-2.4 -1.2H2.4M-2.4 0.8H0.4" stroke-width="0.6"/><path d="M2.2 2.2L4.4 4.4M4.4 2.2L2.2 4.4" stroke-width="0.7"/></g></svg>
  <svg style="left:326.3px;top:8.25px" width="1" height="1"><g stroke="#dedede" stroke-width="0.9" fill="none" stroke-linejoin="round" ><path d="M-0.6 -3.6V3.6M-3.4 -2.4V2.4" /><path d="M-3.4 -2.6H-2.2M-3.4 2.6H-2.2M2 -3.4H3V1" stroke="#bbb"/><path d="M3 2.2V4.2M2 3.2H4" stroke-width="0.7"/></g></svg>
  <svg style="left:828.2px;top:8.25px" width="1" height="1"><g stroke="#d0d0d0" stroke-width="0.8" fill="none" stroke-linejoin="round" ><rect x="-1.7" y="-4.2" width="3.4" height="5.6" rx="1.7" fill="#6d6d6d"/><path d="M-3.2 -0.6V0.4Q-3.2 3 0 3Q3.2 3 3.2 0.4V-0.6M0 3V4.4M-1.8 4.4H1.8"/></g></svg>
  <div class="a" style="left:841.2px;top:4.5px;width:0.7px;height:8px;background:#3a3a3a"></div>
  <div class="a" style="left:849.2px;top:1.9px;width:13.2px;height:12.8px;border-radius:2px;background:#1a1a1b"></div>
  <svg style="left:855.8px;top:8.25px" width="1" height="1"><g stroke="#10c4d2" stroke-width="0.9" fill="none" stroke-linejoin="round" ><rect x="-4.4" y="-1.6" width="3.4" height="3.2" fill="#10c4d2" stroke="none"/><rect x="1" y="-1.6" width="3.4" height="3.2" fill="#10c4d2" stroke="none"/><path d="M-1.4 0H1.4" stroke-width="1"/></g></svg>
  <div class="a" style="left:869.2px;top:1.9px;width:13.6px;height:12.8px;border-radius:2px;background:#1a1a1b"></div>
  <svg style="left:876px;top:8.25px" width="1" height="1"><g stroke="#10c4d2" stroke-width="0.9" fill="none" stroke-linejoin="round" ><rect x="-4.2" y="-1.6" width="8.4" height="3.2" fill="#10c4d2" stroke="none"/><path d="M0 -4.2V4.2" stroke-dasharray="1 0.8" stroke-width="0.9"/><path d="M-2.4 -3.4L-1.8 -2.6M2.4 -3.4L1.8 -2.6M-2.4 3.4L-1.8 2.6M2.4 3.4L1.8 2.6" stroke-width="0.6"/></g></svg>
  <div class="a" style="left:889.2px;top:1.9px;width:13.6px;height:12.8px;border-radius:2px;background:#1a1a1b"></div>
  <svg style="left:896px;top:8.25px" width="1" height="1"><g stroke="#10c4d2" stroke-width="0.9" fill="none" stroke-linejoin="round" ><rect x="-4.4" y="-1.6" width="3.6" height="3.2" fill="#10c4d2" stroke="none"/><rect x="0.8" y="-1.6" width="3.6" height="3.2" fill="#10c4d2" stroke="none"/><path d="M-1 0H1" stroke-width="1.2"/></g></svg>
  <div class="a" style="left:904px;top:1.9px;width:6.6px;height:12.8px;border-radius:2px;background:#1a1a1b"></div>
  <svg style="left:907.3px;top:8.25px" width="1" height="1"><g stroke="#e6e6e6" stroke-width="1" fill="none" stroke-linejoin="round" ><path d="M-1.6 -0.6L0 1L1.6 -0.6"/></g></svg>
  <div class="a" style="left:917.4px;top:1.9px;width:13.6px;height:12.8px;border-radius:2px;background:#1a1a1b"></div>
  <svg style="left:924.2px;top:8.25px" width="1" height="1"><g stroke="#10c4d2" stroke-width="0.9" fill="none" stroke-linejoin="round" ><rect x="-4.4" y="-1.6" width="3.6" height="3.2" fill="#10c4d2" stroke="none"/><rect x="0.6" y="-1.2" width="3.6" height="2.4" fill="#10c4d2" stroke="none"/><path d="M-0.2 -4V4" stroke-width="0.9"/><path d="M0.6 0.4L3.8 2.4L2.2 2.6L1.6 4Z" fill="#10c4d2" stroke-width="0.4"/></g></svg>
  <div class="a" style="left:932.2px;top:1.9px;width:6.8px;height:12.8px;border-radius:2px;background:#1a1a1b"></div>
  <svg style="left:935.6px;top:8.25px" width="1" height="1"><g stroke="#e6e6e6" stroke-width="1" fill="none" stroke-linejoin="round" ><path d="M-1.6 -0.6L0 1L1.6 -0.6"/></g></svg>
  <div class="a" style="left:946px;top:4.5px;width:0.7px;height:8px;background:#3a3a3a"></div>
  <svg style="left:959.2px;top:8.25px" width="1" height="1"><g stroke="#d6d6d6" stroke-width="0.8" fill="none" stroke-linejoin="round" ><rect x="-4.8" y="-3.2" width="8.4" height="5.4" fill="#4a4a4a"/><path d="M-3.2 1L-1.4 -1L0.4 1" stroke-width="0.6"/><rect x="0.6" y="-0.6" width="4" height="4" fill="#262626" stroke-width="0.7"/><path d="M1.6 2.4L3.6 0.4" stroke-width="0.6"/></g></svg>
  <svg style="left:979.9px;top:8.25px" width="1" height="1"><g stroke="#d6d6d6" stroke-width="0.9" fill="none" stroke-linejoin="round" ><circle r="3.4"/><path d="M-1.6 0H1.6"/><path d="M2.6 2.6L3.8 3.8"/></g></svg>
  <div class="a" style="left:993.6px;top:8.15px;width:53.8px;height:0.9px;background:#0c0c0c"></div>
  <div class="a" style="left:993.6px;top:8.15px;width:5px;height:0.9px;background:#e8e8e8"></div>
  <div class="a" style="left:998px;top:5.2px;width:3.8px;height:6.8px;border-radius:1.2px;background:#f2f2f2"></div>
  <svg style="left:1060.5px;top:8.25px" width="1" height="1"><g stroke="#d6d6d6" stroke-width="0.9" fill="none" stroke-linejoin="round" ><circle r="3.4"/><path d="M-1.6 0H1.6M0 -1.6V1.6"/><path d="M2.6 2.6L3.8 3.8"/></g></svg>
  <div class="a" style="left:0;top:17.4px;width:1070px;height:0.8px;background:#1e1e1e"></div>
  <div class="a" style="left:98.3px;top:18.1px;width:393.5px;height:0.9px;background:#5a4a12"></div>
  <svg style="left:0;top:0" width="1070" height="251" viewBox="5 329 1070 251"><path d="M103.30 349.2V355.2" stroke="#585858" stroke-width="0.8"/><path d="M135.23 349.2V352" stroke="#454545" stroke-width="0.8"/><path d="M151.20 349.2V352" stroke="#454545" stroke-width="0.8"/><path d="M167.16 349.2V352" stroke="#454545" stroke-width="0.8"/><path d="M183.13 349.2V352" stroke="#454545" stroke-width="0.8"/><path d="M199.10 349.2V352" stroke="#454545" stroke-width="0.8"/><path d="M215.06 349.2V352" stroke="#454545" stroke-width="0.8"/><path d="M231.03 349.2V352" stroke="#454545" stroke-width="0.8"/><path d="M246.99 349.2V352" stroke="#454545" stroke-width="0.8"/><path d="M262.96 349.2V355.2" stroke="#585858" stroke-width="0.8"/><path d="M294.89 349.2V352" stroke="#454545" stroke-width="0.8"/><path d="M310.86 349.2V352" stroke="#454545" stroke-width="0.8"/><path d="M326.82 349.2V352" stroke="#454545" stroke-width="0.8"/><path d="M342.79 349.2V352" stroke="#454545" stroke-width="0.8"/><path d="M358.76 349.2V352" stroke="#454545" stroke-width="0.8"/><path d="M374.72 349.2V352" stroke="#454545" stroke-width="0.8"/><path d="M390.69 349.2V352" stroke="#454545" stroke-width="0.8"/><path d="M406.65 349.2V352" stroke="#454545" stroke-width="0.8"/><path d="M422.62 349.2V355.2" stroke="#585858" stroke-width="0.8"/><path d="M454.55 349.2V352" stroke="#454545" stroke-width="0.8"/><path d="M470.52 349.2V352" stroke="#454545" stroke-width="0.8"/><path d="M486.48 349.2V352" stroke="#454545" stroke-width="0.8"/><path d="M502.45 349.2V352" stroke="#454545" stroke-width="0.8"/><path d="M518.42 349.2V352" stroke="#454545" stroke-width="0.8"/><path d="M534.38 349.2V352" stroke="#454545" stroke-width="0.8"/><path d="M550.35 349.2V352" stroke="#454545" stroke-width="0.8"/><path d="M566.31 349.2V352" stroke="#454545" stroke-width="0.8"/><path d="M582.28 349.2V355.2" stroke="#585858" stroke-width="0.8"/><path d="M614.21 349.2V352" stroke="#454545" stroke-width="0.8"/><path d="M630.18 349.2V352" stroke="#454545" stroke-width="0.8"/><path d="M646.14 349.2V352" stroke="#454545" stroke-width="0.8"/><path d="M662.11 349.2V352" stroke="#454545" stroke-width="0.8"/><path d="M678.08 349.2V352" stroke="#454545" stroke-width="0.8"/><path d="M694.04 349.2V352" stroke="#454545" stroke-width="0.8"/><path d="M710.01 349.2V352" stroke="#454545" stroke-width="0.8"/><path d="M725.97 349.2V352" stroke="#454545" stroke-width="0.8"/><path d="M741.94 349.2V355.2" stroke="#585858" stroke-width="0.8"/><path d="M773.87 349.2V352" stroke="#454545" stroke-width="0.8"/><path d="M789.84 349.2V352" stroke="#454545" stroke-width="0.8"/><path d="M805.80 349.2V352" stroke="#454545" stroke-width="0.8"/><path d="M821.77 349.2V352" stroke="#454545" stroke-width="0.8"/><path d="M837.74 349.2V352" stroke="#454545" stroke-width="0.8"/><path d="M853.70 349.2V352" stroke="#454545" stroke-width="0.8"/><path d="M869.67 349.2V352" stroke="#454545" stroke-width="0.8"/><path d="M885.63 349.2V352" stroke="#454545" stroke-width="0.8"/><path d="M901.60 349.2V355.2" stroke="#585858" stroke-width="0.8"/><path d="M933.53 349.2V352" stroke="#454545" stroke-width="0.8"/><path d="M949.50 349.2V352" stroke="#454545" stroke-width="0.8"/><path d="M965.46 349.2V352" stroke="#454545" stroke-width="0.8"/><path d="M981.43 349.2V352" stroke="#454545" stroke-width="0.8"/><path d="M997.40 349.2V352" stroke="#454545" stroke-width="0.8"/><path d="M1013.36 349.2V352" stroke="#454545" stroke-width="0.8"/><path d="M1029.33 349.2V352" stroke="#454545" stroke-width="0.8"/><path d="M1045.29 349.2V352" stroke="#454545" stroke-width="0.8"/><path d="M1061.26 349.2V355.2" stroke="#585858" stroke-width="0.8"/></svg>
  <div class="t" style="left:100.3px;top:18.3px;font-size:5.6px;color:#6a6a6a">00:00</div>
  <div class="t" style="left:259.96px;top:18.3px;font-size:5.6px;color:#6a6a6a">00:05</div>
  <div class="t" style="left:419.62px;top:18.3px;font-size:5.6px;color:#6a6a6a">00:10</div>
  <div class="t" style="left:579.28px;top:18.3px;font-size:5.6px;color:#6a6a6a">00:15</div>
  <div class="t" style="left:738.94px;top:18.3px;font-size:5.6px;color:#6a6a6a">00:20</div>
  <div class="t" style="left:898.6px;top:18.3px;font-size:5.6px;color:#6a6a6a">00:25</div>
  <div class="t" style="left:1058.26px;top:18.3px;font-size:5.6px;color:#6a6a6a;width:8.5px;overflow:hidden">00:30</div>
  <div class="a" style="left:0;top:80.7px;width:69.4px;height:35.5px;background:#2a2a2a"></div>
  <div class="a" style="left:0;top:118.4px;width:69.4px;height:42.3px;background:#2a2a2a"></div>
  <div class="a" style="left:96px;top:80.7px;width:970.7px;height:35.5px;background:#303030"></div>
  <div class="a" style="left:96px;top:118.4px;width:970.7px;height:42.3px;background:#2a2a2a"></div>
  <div class="a" style="left:69.2px;top:33px;width:0.8px;height:218px;background:#1c1c1c"></div>
  <svg style="left:7.9px;top:98px" width="1" height="1"><g stroke="#6e6e6e" stroke-width="0.7" fill="none"><rect x="-3.6" y="-2.6" width="7.2" height="5.2" rx="0.6"/><path d="M-0.8 -1.1L1.1 0L-0.8 1.1Z" fill="#8a8a8a" stroke="none"/></g></svg>
  <svg style="left:21.3px;top:98px" width="1" height="1"><g stroke="#d0d0d0" stroke-width="0.7" fill="none"><rect x="-2.1" y="-0.2" width="4.2" height="3.2" rx="0.6" fill="#cfcfcf" stroke="none"/><path d="M-1.2 -0.2V-1.5A1.2 1.2 0 0 1 1.2 -1.5V-0.2" stroke-width="0.8"/><path d="M-0.9 1.4H0.9" stroke="#2a2a2a" stroke-width="0.7"/></g></svg>
  <svg style="left:34.7px;top:98px" width="1" height="1"><g stroke="#bdbdbd" stroke-width="0.7" fill="none"><path d="M-3.6 0Q0 -3.6 3.6 0Q0 3.6 -3.6 0Z" fill="#d0d0d0" stroke="none"/><circle r="1.3" fill="#2a2a2a" stroke="none"/><circle r="0.6" fill="#d0d0d0" stroke="none"/></g></svg>
  <svg style="left:48px;top:98px" width="1" height="1"><g stroke="#bdbdbd" stroke-width="0.7" fill="none"><path d="M-3.2 -1H-1.8L0 -2.6V2.6L-1.8 1H-3.2Z" fill="#d0d0d0" stroke="none"/><path d="M1.2 -1.2Q2 0 1.2 1.2M2.4 -2.2Q3.8 0 2.4 2.2" stroke="#d0d0d0" stroke-width="0.6"/></g></svg>
  <svg style="left:61.4px;top:98px" width="1" height="1"><g stroke="#bdbdbd" stroke-width="0.7" fill="none"><circle cx="-2.5" r="0.5" fill="#707070" stroke="none"/><circle r="0.5" fill="#707070" stroke="none"/><circle cx="2.5" r="0.5" fill="#707070" stroke="none"/></g></svg>
  <svg style="left:7.9px;top:139px" width="1" height="1"><g stroke="#6e6e6e" stroke-width="0.7" fill="none"><rect x="-3.6" y="-2.6" width="7.2" height="5.2" rx="0.6"/><path d="M-0.8 -1.1L1.1 0L-0.8 1.1Z" fill="#8a8a8a" stroke="none"/></g></svg>
  <svg style="left:21.3px;top:139px" width="1" height="1"><g stroke="#d0d0d0" stroke-width="0.7" fill="none"><rect x="-2.1" y="-0.2" width="4.2" height="3.2" rx="0.6" fill="#cfcfcf" stroke="none"/><path d="M-1.2 -0.2V-1.5A1.2 1.2 0 0 1 1.2 -1.5V-0.2" stroke-width="0.8"/><path d="M-0.9 1.4H0.9" stroke="#2a2a2a" stroke-width="0.7"/></g></svg>
  <svg style="left:34.7px;top:139px" width="1" height="1"><g stroke="#bdbdbd" stroke-width="0.7" fill="none"><path d="M-3.6 0Q0 -3.6 3.6 0Q0 3.6 -3.6 0Z" fill="#d0d0d0" stroke="none"/><circle r="1.3" fill="#2a2a2a" stroke="none"/><circle r="0.6" fill="#d0d0d0" stroke="none"/></g></svg>
  <svg style="left:48px;top:139px" width="1" height="1"><g stroke="#bdbdbd" stroke-width="0.7" fill="none"><path d="M-3.2 -1H-1.8L0 -2.6V2.6L-1.8 1H-3.2Z" fill="#d0d0d0" stroke="none"/><path d="M1.2 -1.2Q2 0 1.2 1.2M2.4 -2.2Q3.8 0 2.4 2.2" stroke="#d0d0d0" stroke-width="0.6"/></g></svg>
  <svg style="left:61.4px;top:139px" width="1" height="1"><g stroke="#bdbdbd" stroke-width="0.7" fill="none"><circle cx="-2.5" r="0.5" fill="#707070" stroke="none"/><circle r="0.5" fill="#707070" stroke="none"/><circle cx="2.5" r="0.5" fill="#707070" stroke="none"/></g></svg>
  <div class="a" style="left:72px;top:128.8px;width:21.4px;height:21.4px;border-radius:2.5px;background:#3a3a3a;border:0.6px dashed #444"></div>
  <div class="t" style="left:76px;top:134.6px;font-size:6.6px;color:#ececec;font-weight:500">封面</div>
  <div class="a" style="left:96.3px;top:82.1px;width:220.9px;height:32.8px;background:#05535b;border-radius:2px"></div>
  <div class="a" style="left:317.8px;top:82px;width:173.9px;height:32.9px;background:#05535b;border-radius:0 2px 2px 0"></div>
  <div class="a" style="left:97.8px;top:119.1px;width:393.9px;height:40.5px;background:#034a52;border-radius:2px"></div>
  <div class="a" style="left:97.8px;top:119.1px;width:393.9px;height:10.4px;background:#05535b;border-radius:2px 2px 0 0"></div>
  <svg style="left:0;top:0" width="1070" height="251" viewBox="5 329 1070 251"><clipPath id="k1"><rect x="103" y="421.1" width="218.10000000000002" height="13.9"/></clipPath><rect x="103" y="421.1" width="218.10000000000002" height="13.9" fill="#fff"/><g clip-path="url(#k1)"><use href="#boy" x="98.55" y="407.60" width="35.40" height="36.30"/><use href="#boy" x="126.80" y="407.60" width="35.40" height="36.30"/><use href="#boy" x="155.05" y="407.60" width="35.40" height="36.30"/><use href="#boy" x="183.30" y="407.60" width="35.40" height="36.30"/><use href="#boy" x="211.55" y="407.60" width="35.40" height="36.30"/><use href="#boy" x="239.80" y="407.60" width="35.40" height="36.30"/><use href="#boy" x="268.05" y="407.60" width="35.40" height="36.30"/><use href="#boy" x="296.30" y="407.60" width="35.40" height="36.30"/></g><clipPath id="k2"><rect x="322.8" y="421.1" width="173.89999999999998" height="13.9"/></clipPath><rect x="322.8" y="421.1" width="173.9" height="13.9" fill="#fff"/><g clip-path="url(#k2)"><use href="#girlT" x="321.60" y="421.1" width="28.4" height="13.9"/><use href="#girlT" x="350.20" y="421.1" width="28.4" height="13.9"/><use href="#girlT" x="378.80" y="421.1" width="28.4" height="13.9"/><use href="#girlT" x="407.40" y="421.1" width="28.4" height="13.9"/><use href="#girlT" x="436.00" y="421.1" width="28.4" height="13.9"/><use href="#girlT" x="464.60" y="421.1" width="28.4" height="13.9"/><use href="#girlT" x="493.20" y="421.1" width="28.4" height="13.9"/></g><path d="M103 443.2 L103.0 440.9 L104.0 439.4 L105.0 438.8 L106.0 437.6 L107.1 437.4 L108.1 438.0 L109.1 438.5 L110.1 439.6 L111.1 441.2 L112.1 441.4 L113.2 439.5 L114.3 439.1 L115.4 438.5 L116.4 438.4 L117.5 437.2 L118.6 437.6 L119.7 437.8 L120.7 438.7 L121.8 440.1 L122.9 441.2 L124.0 442.6 L125.0 442.6 L126.0 442.6 L127.1 442.4 L128.1 442.4 L129.1 442.3 L130.2 442.4 L131.2 442.4 L132.3 442.3 L133.3 442.4 L134.3 442.6 L135.4 442.6 L136.4 442.6 L137.4 442.6 L138.5 442.6 L139.5 442.5 L140.6 442.4 L141.6 442.4 L142.6 442.3 L143.7 442.3 L144.7 442.3 L145.7 442.4 L146.8 442.3 L147.8 442.3 L148.9 442.4 L149.9 442.4 L150.9 442.4 L152.0 442.6 L153.0 442.6 L154.1 442.6 L155.1 442.1 L156.1 441.5 L157.1 441.0 L158.1 440.3 L159.1 439.9 L160.1 440.2 L161.1 440.2 L162.1 440.2 L163.1 440.3 L164.1 441.0 L165.1 441.3 L166.1 442.1 L167.1 441.8 L168.1 440.9 L169.1 440.1 L170.1 440.0 L171.1 439.3 L172.1 439.0 L173.2 439.4 L174.2 439.4 L175.2 438.8 L176.2 439.6 L177.2 439.6 L178.2 440.1 L179.2 440.6 L180.2 440.9 L181.2 441.8 L182.2 441.4 L183.2 440.4 L184.2 439.5 L185.2 439.4 L186.3 439.3 L187.3 439.4 L188.3 439.1 L189.3 440.0 L190.3 440.7 L191.3 441.5 L192.3 442.4 L193.4 441.7 L194.4 441.0 L195.4 440.7 L196.4 440.8 L197.4 440.5 L198.4 440.3 L199.4 439.9 L200.4 440.0 L201.4 440.4 L202.4 440.5 L203.4 440.2 L204.4 440.8 L205.4 441.0 L206.4 441.1 L207.4 441.5 L208.4 442.3 L209.4 441.3 L210.4 439.8 L211.4 439.1 L212.5 438.6 L213.5 437.9 L214.5 437.2 L215.5 437.5 L216.6 437.0 L217.6 437.3 L218.6 436.5 L219.6 437.6 L220.6 436.8 L221.7 436.7 L222.7 438.2 L223.7 437.9 L224.7 438.4 L225.7 438.9 L226.8 440.0 L227.8 441.5 L228.8 441.9 L229.8 440.9 L230.8 440.3 L231.9 440.0 L232.9 439.4 L233.9 439.5 L234.9 438.8 L236.0 439.2 L237.0 439.9 L238.0 440.0 L239.0 440.8 L240.0 441.7 L241.1 441.6 L242.2 440.1 L243.3 439.9 L244.4 439.1 L245.4 438.9 L246.5 439.2 L247.6 439.7 L248.7 440.2 L249.8 441.7 L250.9 441.7 L251.9 440.8 L252.9 439.6 L253.9 439.5 L254.9 438.5 L255.9 438.7 L256.9 437.9 L258.0 438.2 L259.0 438.4 L260.0 437.9 L261.0 438.1 L262.0 437.5 L263.0 438.4 L264.0 438.4 L265.0 438.7 L266.0 438.8 L267.0 440.1 L268.0 440.5 L269.0 441.6 L270.0 441.5 L271.0 440.0 L272.1 439.0 L273.1 438.9 L274.1 438.0 L275.2 438.0 L276.2 437.9 L277.2 438.0 L278.3 437.3 L279.3 437.7 L280.3 437.3 L281.4 438.0 L282.4 438.5 L283.4 439.0 L284.5 439.8 L285.5 441.4 L286.6 442.3 L287.6 441.7 L288.6 441.1 L289.6 441.2 L290.6 440.9 L291.6 440.4 L292.7 440.6 L293.7 440.4 L294.7 440.1 L295.7 440.2 L296.7 440.2 L297.7 440.0 L298.7 440.4 L299.8 440.6 L300.8 440.8 L301.8 440.7 L302.8 441.2 L303.8 441.8 L304.8 442.4 L305.9 441.2 L306.9 439.9 L308.0 438.9 L309.1 438.4 L310.2 437.9 L311.2 437.9 L312.3 438.1 L313.4 438.8 L314.5 438.7 L315.6 440.0 L316.6 441.3 L317.7 442.6 L318.8 442.6 L319.8 442.6 L320.8 442.6 L321 443.2Z" fill="#178088"/><path d="M323.3 443.6 L323.3 441.5 L324.4 439.6 L325.5 439.3 L326.6 438.7 L327.7 437.6 L328.8 438.7 L329.9 438.7 L331.0 439.8 L332.1 441.4 L333.2 441.7 L334.3 440.7 L335.3 439.8 L336.3 439.0 L337.4 438.6 L338.4 438.6 L339.4 438.6 L340.5 438.2 L341.5 438.6 L342.5 439.1 L343.6 440.1 L344.6 440.4 L345.6 441.9 L346.7 443.0 L347.7 443.0 L348.8 443.0 L349.8 442.9 L350.9 442.8 L351.9 442.7 L353.0 442.7 L354.0 442.8 L355.1 442.8 L356.1 442.6 L357.1 442.7 L358.2 442.8 L359.2 442.7 L360.3 442.9 L361.3 443.0 L362.4 443.0 L363.4 443.0 L364.5 441.7 L365.5 439.9 L366.6 439.6 L367.6 438.4 L368.7 438.1 L369.8 437.7 L370.8 437.9 L371.9 438.6 L372.9 439.5 L374.0 440.4 L375.0 441.5 L376.1 443.0 L377.2 443.0 L378.2 442.9 L379.2 442.8 L380.3 442.8 L381.3 442.6 L382.4 442.7 L383.4 442.8 L384.5 442.8 L385.5 442.9 L386.6 443.0 L387.6 443.0 L388.7 443.0 L389.7 443.0 L390.8 443.0 L391.8 442.9 L392.8 442.9 L393.9 442.7 L394.9 442.8 L395.9 442.8 L397.0 442.6 L398.0 442.7 L399.1 442.8 L400.1 442.8 L401.1 442.9 L402.2 443.0 L403.2 443.0 L404.2 443.0 L405.3 441.6 L406.3 440.6 L407.4 439.2 L408.4 438.5 L409.5 438.3 L410.5 438.4 L411.6 437.3 L412.6 437.9 L413.6 438.4 L414.7 438.2 L415.7 439.1 L416.8 439.0 L417.8 440.4 L418.9 441.6 L419.9 441.1 L421.0 438.9 L422.1 438.9 L423.1 437.5 L424.2 438.3 L425.3 437.9 L426.4 439.8 L427.4 440.8 L428.5 442.4 L429.6 441.2 L430.6 440.9 L431.7 440.7 L432.7 440.0 L433.8 439.8 L434.8 439.7 L435.9 439.9 L436.9 439.9 L438.0 439.6 L439.0 439.8 L440.1 440.3 L441.2 440.4 L442.2 440.7 L443.3 441.3 L444.3 442.3 L445.4 441.3 L446.4 440.1 L447.4 439.2 L448.4 438.5 L449.4 437.9 L450.4 438.0 L451.4 437.2 L452.4 437.0 L453.4 437.8 L454.5 438.3 L455.5 439.7 L456.5 441.1 L457.5 442.0 L458.5 441.0 L459.6 440.2 L460.6 439.6 L461.7 439.5 L462.7 439.1 L463.8 438.9 L464.8 439.0 L465.9 438.8 L466.9 438.2 L467.9 439.0 L469.0 439.0 L470.0 440.0 L471.1 440.2 L472.1 440.7 L473.2 441.9 L474.2 441.6 L475.3 440.1 L476.3 438.8 L477.3 438.3 L478.4 438.3 L479.4 437.2 L480.5 437.9 L481.5 437.5 L482.5 436.7 L483.6 437.0 L484.6 437.9 L485.7 438.3 L486.7 438.5 L487.7 438.9 L488.8 440.1 L489.8 441.4 L490.9 441.6 L491.9 440.4 L492.9 439.0 L493.9 438.6 L495.0 438.6 L496.0 438.1 L496.2 443.6Z" fill="#178088"/><path d="M103 440.4H321M322.8 440.4H496.7" stroke="#2f8f96" stroke-width="0.35"/><rect x="117.5" y="435.4" width="1.4" height="0.5" fill="#a8943a" opacity="0.7"/><rect x="136.5" y="435.4" width="1.4" height="0.5" fill="#a8943a" opacity="0.7"/><rect x="171" y="435.4" width="1.4" height="0.5" fill="#a8943a" opacity="0.7"/><rect x="185" y="435.4" width="1.4" height="0.5" fill="#a8943a" opacity="0.7"/><rect x="201.5" y="435.4" width="1.4" height="0.5" fill="#a8943a" opacity="0.7"/><rect x="228" y="435.4" width="1.4" height="0.5" fill="#a8943a" opacity="0.7"/><rect x="262" y="435.4" width="1.4" height="0.5" fill="#a8943a" opacity="0.7"/><rect x="291" y="435.4" width="1.4" height="0.5" fill="#a8943a" opacity="0.7"/><rect x="333" y="435.4" width="1.4" height="0.5" fill="#a8943a" opacity="0.7"/><rect x="338" y="435.4" width="1.4" height="0.5" fill="#a8943a" opacity="0.7"/><rect x="350" y="435.4" width="1.4" height="0.5" fill="#a8943a" opacity="0.7"/><rect x="357" y="435.4" width="1.4" height="0.5" fill="#a8943a" opacity="0.7"/><rect x="366" y="435.4" width="1.4" height="0.5" fill="#a8943a" opacity="0.7"/><rect x="377" y="435.4" width="1.4" height="0.5" fill="#a8943a" opacity="0.7"/><rect x="384" y="435.4" width="1.4" height="0.5" fill="#a8943a" opacity="0.7"/><rect x="420" y="435.4" width="1.4" height="0.5" fill="#a8943a" opacity="0.7"/><rect x="424" y="435.4" width="1.4" height="0.5" fill="#a8943a" opacity="0.7"/><rect x="432" y="435.4" width="1.4" height="0.5" fill="#a8943a" opacity="0.7"/><rect x="478" y="435.4" width="1.4" height="0.5" fill="#a8943a" opacity="0.7"/><clipPath id="k3"><rect x="102.8" y="458.3" width="393.9" height="21.4"/></clipPath><rect x="102.8" y="458.3" width="393.9" height="21.4" fill="#fff"/><g clip-path="url(#k3)"><svg x="103.20" y="458.3" width="27.95" height="21.4" viewBox="4.5 0 58 45" preserveAspectRatio="none" style="position:static;overflow:hidden"><use href="#png" x="0" y="0" width="67" height="45"/></svg><svg x="131.15" y="458.3" width="27.95" height="21.4" viewBox="4.5 0 58 45" preserveAspectRatio="none" style="position:static;overflow:hidden"><use href="#png" x="0" y="0" width="67" height="45"/></svg><svg x="159.10" y="458.3" width="27.95" height="21.4" viewBox="4.5 0 58 45" preserveAspectRatio="none" style="position:static;overflow:hidden"><use href="#png" x="0" y="0" width="67" height="45"/></svg><svg x="187.05" y="458.3" width="27.95" height="21.4" viewBox="4.5 0 58 45" preserveAspectRatio="none" style="position:static;overflow:hidden"><use href="#png" x="0" y="0" width="67" height="45"/></svg><svg x="215.00" y="458.3" width="27.95" height="21.4" viewBox="4.5 0 58 45" preserveAspectRatio="none" style="position:static;overflow:hidden"><use href="#png" x="0" y="0" width="67" height="45"/></svg><svg x="242.95" y="458.3" width="27.95" height="21.4" viewBox="4.5 0 58 45" preserveAspectRatio="none" style="position:static;overflow:hidden"><use href="#png" x="0" y="0" width="67" height="45"/></svg><svg x="270.90" y="458.3" width="27.95" height="21.4" viewBox="4.5 0 58 45" preserveAspectRatio="none" style="position:static;overflow:hidden"><use href="#png" x="0" y="0" width="67" height="45"/></svg><svg x="298.85" y="458.3" width="27.95" height="21.4" viewBox="4.5 0 58 45" preserveAspectRatio="none" style="position:static;overflow:hidden"><use href="#png" x="0" y="0" width="67" height="45"/></svg><svg x="326.80" y="458.3" width="27.95" height="21.4" viewBox="4.5 0 58 45" preserveAspectRatio="none" style="position:static;overflow:hidden"><use href="#png" x="0" y="0" width="67" height="45"/></svg><svg x="354.75" y="458.3" width="27.95" height="21.4" viewBox="4.5 0 58 45" preserveAspectRatio="none" style="position:static;overflow:hidden"><use href="#png" x="0" y="0" width="67" height="45"/></svg><svg x="382.70" y="458.3" width="27.95" height="21.4" viewBox="4.5 0 58 45" preserveAspectRatio="none" style="position:static;overflow:hidden"><use href="#png" x="0" y="0" width="67" height="45"/></svg><svg x="410.65" y="458.3" width="27.95" height="21.4" viewBox="4.5 0 58 45" preserveAspectRatio="none" style="position:static;overflow:hidden"><use href="#png" x="0" y="0" width="67" height="45"/></svg><svg x="438.60" y="458.3" width="27.95" height="21.4" viewBox="4.5 0 58 45" preserveAspectRatio="none" style="position:static;overflow:hidden"><use href="#png" x="0" y="0" width="67" height="45"/></svg><svg x="466.55" y="458.3" width="27.95" height="21.4" viewBox="4.5 0 58 45" preserveAspectRatio="none" style="position:static;overflow:hidden"><use href="#png" x="0" y="0" width="67" height="45"/></svg><svg x="494.50" y="458.3" width="27.95" height="21.4" viewBox="4.5 0 58 45" preserveAspectRatio="none" style="position:static;overflow:hidden"><use href="#png" x="0" y="0" width="67" height="45"/></svg><rect x="103.70" y="458.9" width="1" height="1.3" fill="#63cfe0"/><rect x="131.65" y="458.9" width="1" height="1.3" fill="#63cfe0"/><rect x="159.60" y="458.9" width="1" height="1.3" fill="#63cfe0"/><rect x="187.55" y="458.9" width="1" height="1.3" fill="#63cfe0"/><rect x="215.50" y="458.9" width="1" height="1.3" fill="#63cfe0"/><rect x="243.45" y="458.9" width="1" height="1.3" fill="#63cfe0"/><rect x="271.40" y="458.9" width="1" height="1.3" fill="#63cfe0"/><rect x="299.35" y="458.9" width="1" height="1.3" fill="#63cfe0"/><rect x="327.30" y="458.9" width="1" height="1.3" fill="#63cfe0"/><rect x="355.25" y="458.9" width="1" height="1.3" fill="#63cfe0"/><rect x="383.20" y="458.9" width="1" height="1.3" fill="#63cfe0"/><rect x="411.15" y="458.9" width="1" height="1.3" fill="#63cfe0"/><rect x="439.10" y="458.9" width="1" height="1.3" fill="#63cfe0"/><rect x="467.05" y="458.9" width="1" height="1.3" fill="#63cfe0"/><rect x="495.00" y="458.9" width="1" height="1.3" fill="#63cfe0"/></g></svg>
  <div class="a" style="left:96.3px;top:82.1px;width:220.9px;height:32.8px;border:1.1px solid #f4f4f4;border-left-width:1.6px;border-radius:2px"></div>
  <div class="a" style="left:99.6px;top:83.6px;width:83px;height:7.6px;background:#216169;border-radius:1px"></div>
  <div class="t" style="left:101.2px;top:82.3px;font-size:6.15px;color:#d4eaec;">jimeng-2025-05-13-269-.mp4</div>
  <div class="a" style="left:184.4px;top:83.6px;width:36px;height:7.6px;background:#216169;border-radius:1px"></div>
  <div class="t" style="left:186.0px;top:82.3px;font-size:6.15px;color:#d4eaec;">00:00:06:25</div>
  <div class="a" style="left:318.8px;top:83.6px;width:82px;height:7.6px;background:#216169;border-radius:1px"></div>
  <div class="t" style="left:320.4px;top:82.3px;font-size:6.15px;color:#d4eaec;">jimeng-2025-05-13-268-.mp4</div>
  <div class="a" style="left:403px;top:83.6px;width:33px;height:7.6px;background:#216169;border-radius:1px"></div>
  <div class="t" style="left:404.6px;top:82.3px;font-size:6.15px;color:#d4eaec;">00:00:05:15</div>
  <div class="a" style="left:100.6px;top:120.6px;width:24.6px;height:7.6px;background:#216169;border-radius:1px"></div>
  <div class="t" style="left:102.2px;top:119.3px;font-size:5.4px;color:#d4eaec;font-weight:700;color:#fff;">超清画质</div>
  <div class="a" style="left:126.6px;top:120.6px;width:115px;height:7.6px;background:#216169;border-radius:1px"></div>
  <div class="t" style="left:128.2px;top:119.3px;font-size:6.15px;color:#d4eaec;">9f46605d8c70491e6515bf4b2a76372.png</div>
  <div class="a" style="left:243.6px;top:120.6px;width:36px;height:7.6px;background:#216169;border-radius:1px"></div>
  <div class="t" style="left:245.2px;top:119.3px;font-size:6.15px;color:#d4eaec;">00:00:12:10</div>
  <div class="a" style="left:187.1px;top:24px;width:0.9px;height:218.79999999999995px;background:#d9d9d9"></div>
  <svg style="left:184.9px;top:18px" width="5.4" height="7.8" viewBox="0 0 5.4 7.8"><path d="M0.6 0.6H4.8V5.2L2.7 7.2L0.6 5.2Z" fill="#1a1a1a" stroke="#f2f2f2" stroke-width="1.1"/></svg>
  <svg style="left:0;top:0" width="1070" height="251" viewBox="5 329 1070 251"><path d="M284.6 379.2L214.5 400.2L213.8 397.6L207 404.2L216.2 405.2L215.4 402.6L284.7 379.6Z" fill="#f2261b"/></svg>
  <div class="t" style="left:286.4px;top:46.5px;font-size:14.1px;line-height:18px;height:18px;color:#f2261b">点击视频素材</div>
  <div class="a" style="left:71px;top:246.2px;width:994px;height:3.6px;border-radius:1.8px;background:#3a3a3a"></div>
<!--TL4-->
</div>

<div class="a" style="left:332.2px;top:328.5px;width:13.2px;height:6px;border-radius:3px;background:linear-gradient(90deg,#56dfec,#c9f1fa 55%,#f6c6e2)"></div>
<div class="t" style="left:334.3px;top:326.6px;font-size:4.6px;color:#1a1a1a;font-weight:700">限免</div>
</body>
</html>
